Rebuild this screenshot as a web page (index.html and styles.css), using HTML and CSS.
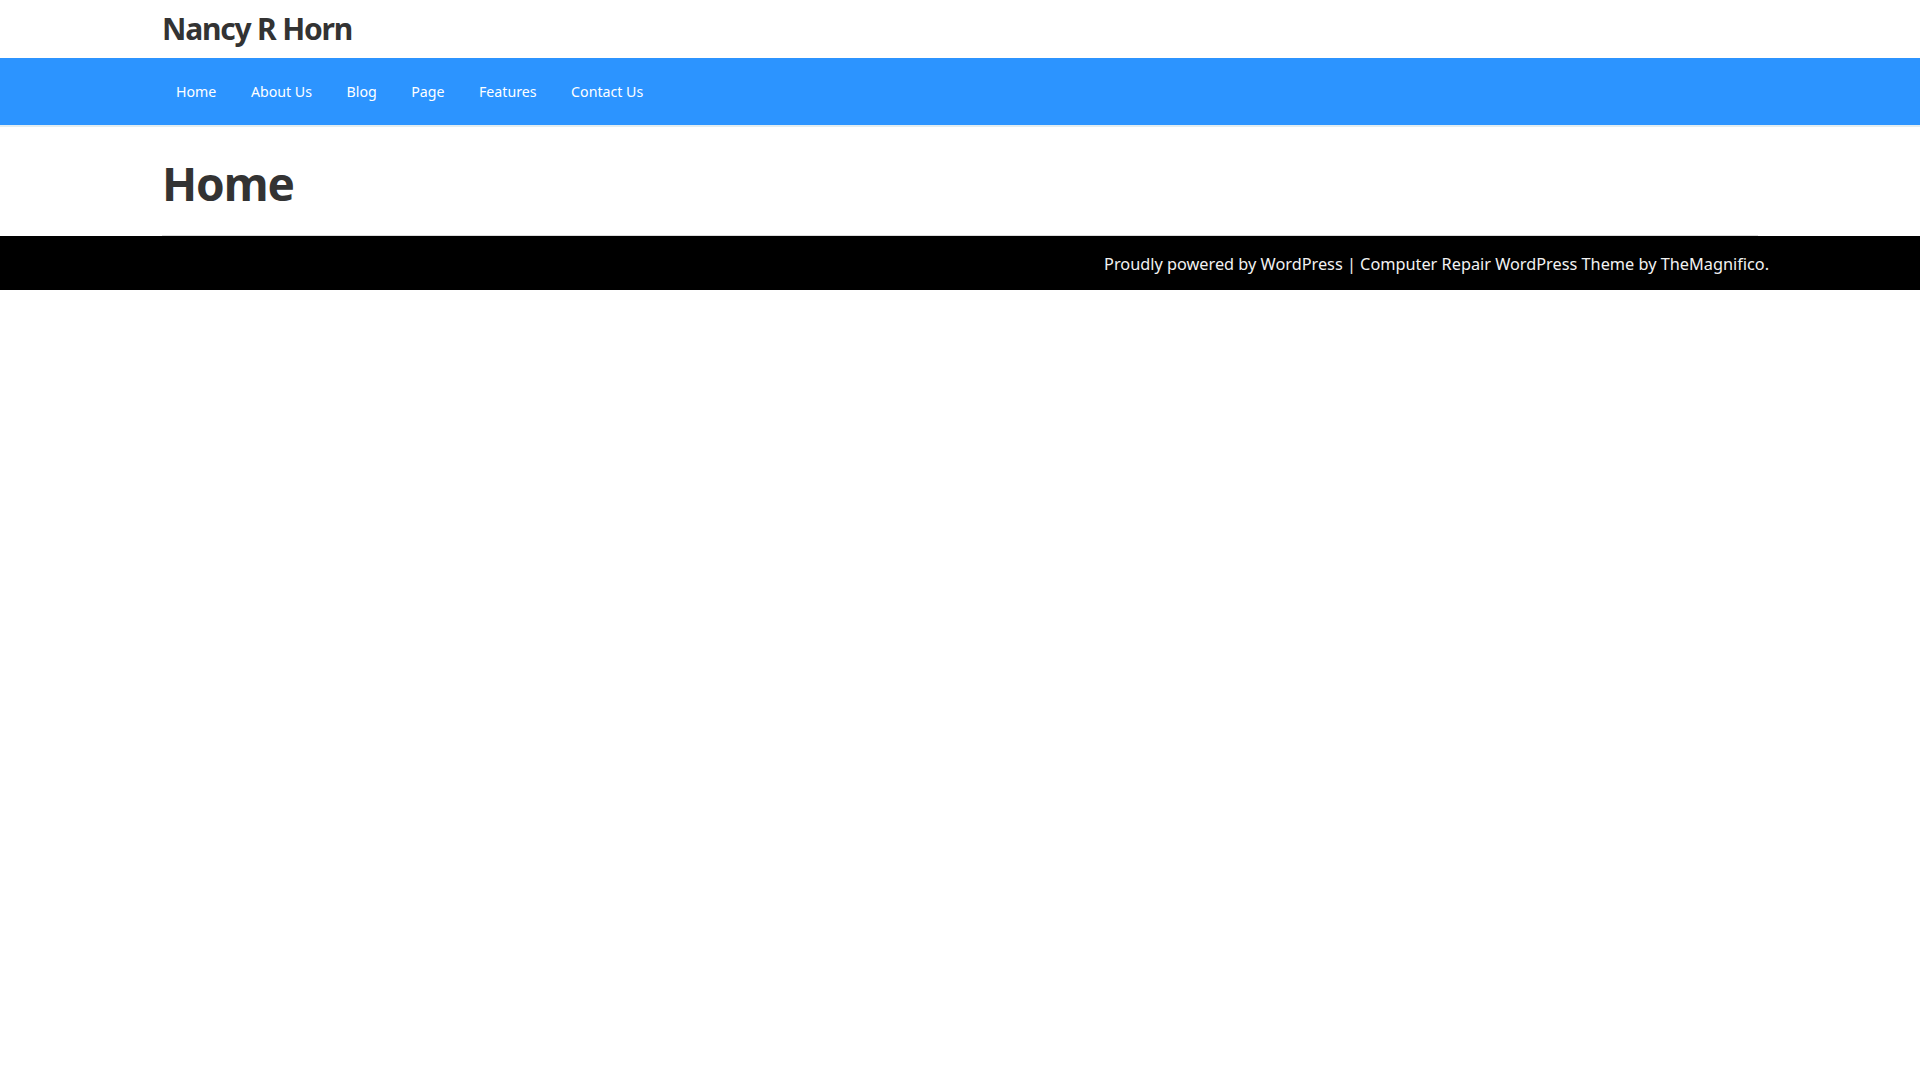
FILE: index.html
```html
<!DOCTYPE html>
<html lang="en">
<head>
<meta charset="utf-8">
<title>Nancy R Horn</title>
<link rel="stylesheet" href="styles.css">
</head>
<body>
<header class="site-header">
  <div class="container">
    <div class="site-title">Nancy R Horn</div>
  </div>
</header>
<nav class="main-nav">
  <div class="container">
    <ul class="menu">
      <li><a href="#">Home</a></li>
      <li><a href="#">About Us</a></li>
      <li><a href="#">Blog</a></li>
      <li><a href="#">Page</a></li>
      <li><a href="#">Features</a></li>
      <li><a href="#">Contact Us</a></li>
    </ul>
  </div>
</nav>
<main class="content">
  <div class="container page-head">
    <h1 class="page-title">Home</h1>
  </div>
</main>
<footer class="site-footer">
  <div class="footer-inner">
    <p class="credits">Proudly powered by WordPress | Computer Repair WordPress Theme by TheMagnifico.</p>
  </div>
</footer>
</body>
</html>
```
FILE: styles.css
```css
* { box-sizing: border-box; }
html, body { margin: 0; padding: 0; background: #fff; }
body { font-family: "Noto Sans", "Open Sans", sans-serif; color: #333; }
.container { width: 1596px; margin: 0 auto; }

.site-header { height: 58px; display: flex; align-items: center; }
.site-title { font-size: 30px; font-weight: 700; color: #333; line-height: 1; letter-spacing: -1.2px; }

.main-nav { background: #2c94ff; border-bottom: 2px solid #e3edf0; }
.menu { list-style: none; margin: 0; padding: 0 0 2px 14px; display: flex; height: 67px; align-items: center; gap: 34.5px; }
.menu a { color: #fff; text-decoration: none; font-size: 14.2px; line-height: 1; }

.page-head { border-bottom: 1px solid #dcdcdc; height: 109px; display: flex; align-items: center; }
.page-title { margin: 0; font-size: 46px; font-weight: 700; color: #333; line-height: 1; padding-top: 4px; letter-spacing: -1.1px; }

.site-footer { background: #000; height: 54px; display: flex; align-items: center; justify-content: flex-end; padding-right: 151px; }
.credits { margin: 0; color: #f2f2f2; font-size: 16.3px; line-height: 1; padding-top: 3px; }
```
